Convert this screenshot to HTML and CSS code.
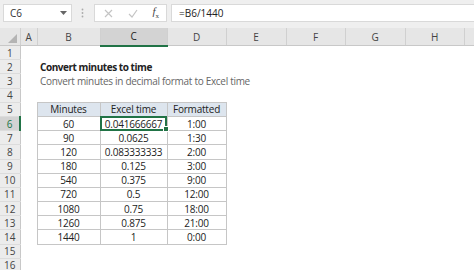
FILE: index.html
```html
<!DOCTYPE html>
<html>
<head>
    <meta charset="UTF-8">
    <title>Convert minutes to time</title>
    <link rel="stylesheet" href="styles.css">
</head>
<body>
    <div class="toolbar">
        <div class="namebox">
            <span>C6</span>
            <svg class="arrow" width="7" height="4" viewBox="0 0 7 4"><path d="M0 0h7L3.5 4z" fill="#666"/></svg>
        </div>
        <svg class="grip" width="3" height="10" viewBox="0 0 3 10">
            <circle cx="1.5" cy="1.5" r="0.9" fill="#aaa"/>
            <circle cx="1.5" cy="5" r="0.9" fill="#aaa"/>
            <circle cx="1.5" cy="8.5" r="0.9" fill="#aaa"/>
        </svg>
        <div class="fxbox">
            <svg width="9" height="9" viewBox="0 0 9 9"><path d="M1 1l7 7M8 1L1 8" stroke="#c4c4c4" stroke-width="1.2"/></svg>
            <svg width="10" height="9" viewBox="0 0 10 9"><path d="M1 5l3 3 5-7" stroke="#c4c4c4" stroke-width="1.2" fill="none"/></svg>
            <span class="fx"><i>f</i><sub>x</sub></span>
        </div>
        <div class="formula">=B6/1440</div>
    </div>

    <table class="sheet">
        <colgroup>
            <col style="width:20px"><col style="width:17px"><col style="width:63px"><col style="width:67px">
            <col style="width:59px"><col style="width:60px"><col style="width:59px"><col style="width:60px">
            <col style="width:59px"><col style="width:10px">
        </colgroup>
        <thead>
            <tr>
                <th class="corner"><svg width="9" height="9" viewBox="0 0 9 9"><path d="M9 0v9H0z" fill="#b4b4b4"/></svg></th>
                <th>A</th><th>B</th><th class="sel">C</th><th>D</th><th>E</th><th>F</th><th>G</th><th>H</th><th></th>
            </tr>
        </thead>
        <tbody>
            <tr><td class="rh">1</td><td></td><td></td><td></td><td></td><td></td><td></td><td></td><td></td><td></td></tr>
            <tr><td class="rh">2</td><td></td><td class="title">Convert minutes to time</td><td></td><td></td><td></td><td></td><td></td><td></td><td></td></tr>
            <tr><td class="rh">3</td><td></td><td class="subtitle">Convert minutes in decimal format to Excel time</td><td></td><td></td><td></td><td></td><td></td><td></td><td></td></tr>
            <tr><td class="rh">4</td><td></td><td></td><td></td><td></td><td></td><td></td><td></td><td></td><td></td></tr>
            <tr><td class="rh">5</td><td></td><td class="hd">Minutes</td><td class="hd">Excel time</td><td class="hd">Formatted</td><td></td><td></td><td></td><td></td><td></td></tr>
            <tr><td class="rh sel">6</td><td></td><td class="dc">60</td><td class="dc active">0.041666667<span class="handle"></span></td><td class="dc">1:00</td><td></td><td></td><td></td><td></td><td></td></tr>
            <tr><td class="rh">7</td><td></td><td class="dc">90</td><td class="dc">0.0625</td><td class="dc">1:30</td><td></td><td></td><td></td><td></td><td></td></tr>
            <tr><td class="rh">8</td><td></td><td class="dc">120</td><td class="dc">0.083333333</td><td class="dc">2:00</td><td></td><td></td><td></td><td></td><td></td></tr>
            <tr><td class="rh">9</td><td></td><td class="dc">180</td><td class="dc">0.125</td><td class="dc">3:00</td><td></td><td></td><td></td><td></td><td></td></tr>
            <tr><td class="rh">10</td><td></td><td class="dc">540</td><td class="dc">0.375</td><td class="dc">9:00</td><td></td><td></td><td></td><td></td><td></td></tr>
            <tr><td class="rh">11</td><td></td><td class="dc">720</td><td class="dc">0.5</td><td class="dc">12:00</td><td></td><td></td><td></td><td></td><td></td></tr>
            <tr><td class="rh">12</td><td></td><td class="dc">1080</td><td class="dc">0.75</td><td class="dc">18:00</td><td></td><td></td><td></td><td></td><td></td></tr>
            <tr><td class="rh">13</td><td></td><td class="dc">1260</td><td class="dc">0.875</td><td class="dc">21:00</td><td></td><td></td><td></td><td></td><td></td></tr>
            <tr><td class="rh">14</td><td></td><td class="dc">1440</td><td class="dc">1</td><td class="dc">0:00</td><td></td><td></td><td></td><td></td><td></td></tr>
            <tr><td class="rh">15</td><td></td><td></td><td></td><td></td><td></td><td></td><td></td><td></td><td></td></tr>
            <tr><td class="rh">16</td><td></td><td></td><td></td><td></td><td></td><td></td><td></td><td></td><td></td></tr>
        </tbody>
    </table>
</body>
</html>
```

FILE: styles.css
```css
body {
    margin: 0;
    background: white;
    font-family: "Open Sans", "Liberation Sans", sans-serif;
    color: #222;
    overflow: hidden;
}
.toolbar {
    display: flex;
    align-items: center;
    height: 28px;
    padding: 4px 0 6px 3px;
    box-sizing: border-box;
    background: #efefef;
}
.namebox {
    display: flex;
    align-items: center;
    justify-content: space-between;
    width: 69px;
    height: 18px;
    padding: 0 4px 0 6px;
    box-sizing: border-box;
    background: white;
    border: 1px solid #d9d9d9;
    font-size: 10px;
    color: #333;
}
.grip {
    margin: 0 10px 0 9px;
}
.fxbox {
    display: flex;
    align-items: center;
    justify-content: space-between;
    width: 73px;
    height: 18px;
    box-sizing: border-box;
    background: white;
    border: 1px solid #d9d9d9;
    padding: 0 7px 0 9px;
}
.fx {
    font-family: "Liberation Serif", serif;
    font-size: 11px;
    color: #444;
}
.fx sub {
    font-size: 7px;
}
.formula {
    flex: 1;
    height: 18px;
    margin-left: 4px;
    padding-left: 7px;
    box-sizing: border-box;
    background: white;
    border: 1px solid #d9d9d9;
    border-right: none;
    font-size: 10px;
    line-height: 16px;
    color: #222;
}
.sheet {
    width: 474px;
    table-layout: fixed;
    border-collapse: collapse;
    font-size: 10px;
    letter-spacing: -0.2px;
}
.sheet th {
    height: 15px;
    padding: 0;
    background: #e6e6e6;
    border-right: 1px solid #d0d0d0;
    border-bottom: 1px solid #c8c8c8;
    font-weight: normal;
    color: #444;
    line-height: 14px;
}
.sheet th.corner {
    text-align: right;
    vertical-align: bottom;
    padding: 0 3px 2px 0;
}
.sheet th.corner svg {
    display: block;
    margin-left: auto;
}
.sheet th.sel {
    background: #d3d3d3;
    border-bottom: 2px solid #217346;
    color: #222;
}
.sheet td {
    box-sizing: border-box;
    height: 14.2px;
    padding: 0;
    line-height: 12px;
    white-space: nowrap;
    overflow: visible;
}
.sheet td.rh {
    background: #ececec;
    border-right: 1px solid #c8c8c8;
    border-bottom: 1px solid #dcdcdc;
    text-align: center;
    color: #444;
    letter-spacing: 0;
}
.sheet td.rh.sel {
    background: #d3d3d3;
    border-right: 2px solid #217346;
    color: #217346;
}
.title {
    padding-left: 3px !important;
    font-weight: bold;
    letter-spacing: -0.45px;
    color: #222;
}
.subtitle {
    padding-left: 3px !important;
    letter-spacing: -0.3px;
    color: #666;
}
.hd {
    background: #dde5ee;
    border: 1px solid #c6c6c6;
    text-align: center;
}
.dc {
    border: 1px solid #c6c6c6;
    text-align: center;
}
.dc.active {
    position: relative;
    outline: 2px solid #217346;
    outline-offset: -2px;
}
.handle {
    position: absolute;
    right: -2px;
    bottom: -2px;
    width: 4px;
    height: 4px;
    background: #217346;
    border: 1px solid white;
}
```
